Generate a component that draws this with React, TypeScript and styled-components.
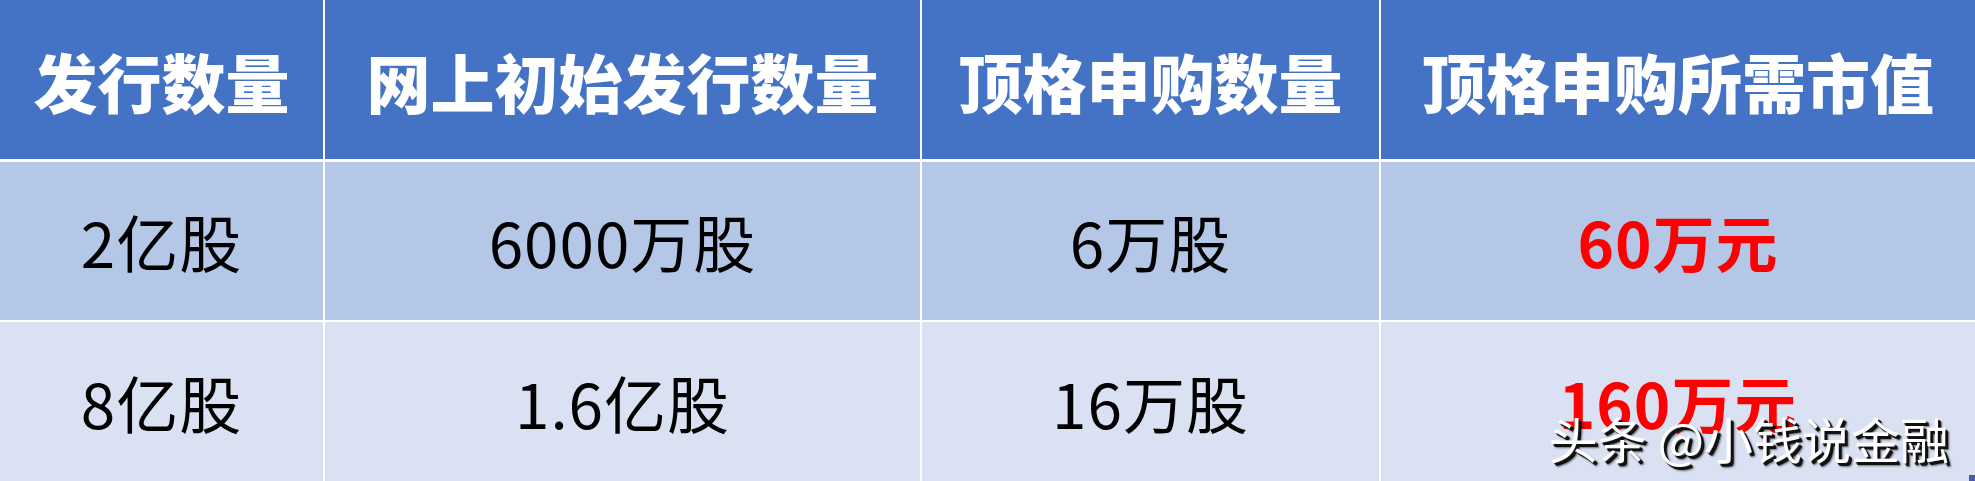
import React from "react";
import styled, { createGlobalStyle } from "styled-components";

const GlobalStyle = createGlobalStyle`
  html, body {
    margin: 0;
    padding: 0;
    background: #ffffff;
  }
  body {
    font-family: "Noto Sans CJK SC", "Noto Sans", sans-serif;
  }
`;

const Page = styled.div`
  position: relative;
  width: 1975px;
  height: 481px;
  overflow: hidden;
  background: #ffffff;
`;

const Table = styled.div`
  display: flex;
  flex-direction: column;
  height: 100%;
`;

const Row = styled.div<{ $height: number; $gapBelow: number }>`
  display: grid;
  grid-template-columns: 323px 595px 457px 1fr;
  column-gap: 2px;
  height: ${(p) => p.$height}px;
  margin-bottom: ${(p) => p.$gapBelow}px;
  flex-shrink: 0;
`;

const HeadCell = styled.div`
  display: flex;
  align-items: center;
  justify-content: center;
  background: #4472c4;
  color: #ffffff;
  font-size: 64px;
  font-weight: 900;
  white-space: nowrap;
`;

const Cell = styled.div<{ $shade: "dark" | "light"; $highlight?: boolean }>`
  display: flex;
  align-items: center;
  justify-content: center;
  background: ${(p) => (p.$shade === "dark" ? "#b4c7e7" : "#dae1f2")};
  color: ${(p) => (p.$highlight ? "#ff0000" : "#000000")};
  font-size: 62px;
  font-weight: ${(p) => (p.$highlight ? 700 : 400)};
  letter-spacing: 1px;
  white-space: nowrap;
`;

const Watermark = styled.div`
  position: absolute;
  right: 26px;
  bottom: 8px;
  color: #ffffff;
  font-size: 49px;
  font-weight: 400;
  white-space: nowrap;
  text-shadow: 3px 3px 0 #111111, 2px 2px 1px #333333, 4px 4px 2px rgba(0, 0, 0, 0.5);
`;

const CornerMark = styled.div`
  position: absolute;
  right: 0;
  bottom: 0;
  width: 6px;
  height: 6px;
  background: #4a5aa8;
`;

const headers = ["发行数量", "网上初始发行数量", "顶格申购数量", "顶格申购所需市值"];

const rows = [
  { shade: "dark" as const, cells: ["2亿股", "6000万股", "6万股", "60万元"] },
  { shade: "light" as const, cells: ["8亿股", "1.6亿股", "16万股", "160万元"] },
];

export default function App() {
  return (
    <Page>
      <GlobalStyle />
      <Table>
        <Row $height={159} $gapBelow={3}>
          {headers.map((h) => (
            <HeadCell key={h}>{h}</HeadCell>
          ))}
        </Row>
        {rows.map((r, i) => (
          <Row key={i} $height={i === 0 ? 158 : 159} $gapBelow={i === 0 ? 2 : 0}>
            {r.cells.map((c, j) => (
              <Cell key={j} $shade={r.shade} $highlight={j === 3}>
                {c}
              </Cell>
            ))}
          </Row>
        ))}
      </Table>
      <Watermark>头条 @小钱说金融</Watermark>
      <CornerMark />
    </Page>
  );
}
